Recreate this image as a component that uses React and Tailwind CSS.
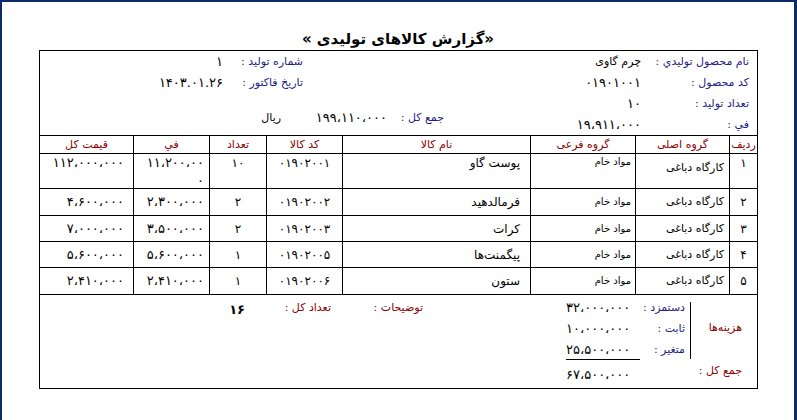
import React from 'react';

const rows = [
  { n: '۱', main: 'کارگاه دباغی', sub: 'مواد خام', name: 'پوست گاو', code: '۰۱۹۰۲۰۰۱', qty: '۱۰', fee: ['۱۱،۲۰۰،۰۰', '۰'], total: '۱۱۲،۰۰۰،۰۰۰' },
  { n: '۲', main: 'کارگاه دباغی', sub: 'مواد خام', name: 'فرمالدهید', code: '۰۱۹۰۲۰۰۲', qty: '۲', fee: ['۲،۳۰۰،۰۰۰'], total: '۴،۶۰۰،۰۰۰' },
  { n: '۳', main: 'کارگاه دباغی', sub: 'مواد خام', name: 'کرات', code: '۰۱۹۰۲۰۰۳', qty: '۲', fee: ['۳،۵۰۰،۰۰۰'], total: '۷،۰۰۰،۰۰۰' },
  { n: '۴', main: 'کارگاه دباغی', sub: 'مواد خام', name: 'پیگمنت‌ها', code: '۰۱۹۰۲۰۰۵', qty: '۱', fee: ['۵،۶۰۰،۰۰۰'], total: '۵،۶۰۰،۰۰۰' },
  { n: '۵', main: 'کارگاه دباغی', sub: 'مواد خام', name: 'ستون', code: '۰۱۹۰۲۰۰۶', qty: '۱', fee: ['۲،۴۱۰،۰۰۰'], total: '۲،۴۱۰،۰۰۰' },
];

const heads = ['ردیف', 'گروه اصلی', 'گروه فرعی', 'نام کالا', 'کد کالا', 'تعداد', 'في', 'قیمت کل'];

// row heights between the grid lines of the reference
const rowHeights = ['h-[35px]', 'h-[27px]', 'h-[26px]', 'h-[26px]', 'h-[27px]'];

const Label = ({ children, className = '' }) => (
  <div className={`text-[#1c1c84] ${className}`}>{children}</div>
);

export default function App() {
  return (
    <div className="w-[797px] h-[420px] overflow-hidden bg-white border-t-2 border-l-2 border-r-[3px] border-[#0d2a6a] font-['DejaVu_Sans',sans-serif] text-black text-[11px]">
      <h1 dir="rtl" className="pt-[27px] pb-[1px] text-center text-[15px] leading-[20px] font-bold">
        «گزارش کالاهای تولیدی »
      </h1>

      <div dir="rtl" className="ml-[37px] w-[719px]">
        {/* header info */}
        <div className="h-[85px] border-t border-x border-black flex">
          <div className="pr-[8px] grid grid-cols-[108px_90px] auto-rows-[21px] leading-[21px]">
            <Label>نام محصول تولیدي :</Label>
            <div>چرم گاوی</div>
            <Label>کد محصول :</Label>
            <div className="text-[13px]">۰۱۹۰۱۰۰۱</div>
            <Label>تعداد تولید :</Label>
            <div className="text-[13px]">۱۰</div>
            <Label>في :</Label>
            <div className="text-[13px]">۱۹،۹۱۱،۰۰۰</div>
          </div>

          <div className="flex-1 flex flex-col">
            <div className="pr-[248px] grid grid-cols-[80px_auto] auto-rows-[21px] leading-[21px]">
              <Label>شماره تولید :</Label>
              <div className="text-[13px]">۱</div>
              <Label>تاریخ فاکتور :</Label>
              <div className="text-[13px]">۱۴۰۳.۰۱.۲۶</div>
            </div>
            <div className="mt-[14px] pr-[107px] flex leading-[21px]">
              <Label className="w-[57px]">جمع کل :</Label>
              <div className="w-[106px] text-[13px]">۱۹۹،۱۱۰،۰۰۰</div>
              <div>ریال</div>
            </div>
          </div>
        </div>

        {/* items */}
        <table className="w-[719px] table-fixed border-collapse">
          <colgroup>
            <col className="w-[28px]" />
            <col className="w-[94px]" />
            <col className="w-[105px]" />
            <col className="w-[188px]" />
            <col className="w-[76px]" />
            <col className="w-[57px]" />
            <col className="w-[76px]" />
            <col className="w-[94px]" />
          </colgroup>
          <thead>
            <tr className="h-[18px]">
              {heads.map((h) => (
                <th key={h} className="border border-black p-0 font-normal text-[#8b0000] text-center leading-[16px]">
                  {h}
                </th>
              ))}
            </tr>
          </thead>
          <tbody>
            {rows.map((r, i) => (
              <tr key={r.n} className={`${rowHeights[i]} ${i === 0 ? 'align-top' : 'align-middle'}`}>
                <td className="border border-black p-0 text-center text-[12px] leading-[18px]">{r.n}</td>
                <td className={`border border-black p-0 pr-[5px] leading-[16px] ${i === 0 ? 'pt-[6px]' : ''}`}>{r.main}</td>
                <td className="border border-black p-0 pr-[4px] text-[10px] leading-[16px]">{r.sub}</td>
                <td className="border border-black p-0 pr-[10px] text-[12px] leading-[18px]">{r.name}</td>
                <td className="border border-black p-0 text-center text-[12px] leading-[18px]">{r.code}</td>
                <td className="border border-black p-0 text-center text-[12px] leading-[18px]">{r.qty}</td>
                <td className="border border-black p-0 pr-[5px] text-[13px]">
                  {r.fee.length > 1 ? (
                    <>
                      <div className="leading-[17px]">{r.fee[0]}</div>
                      <div className="mt-[3px] leading-[13px]">{r.fee[1]}</div>
                    </>
                  ) : (
                    <div className="leading-[18px]">{r.fee[0]}</div>
                  )}
                </td>
                <td className="border border-black p-0 pr-[9px] text-[13px] leading-[18px]">{r.total}</td>
              </tr>
            ))}
          </tbody>
        </table>

        {/* footer */}
        <div className="h-[94px] border-x border-b border-black flex items-start pt-[2px]">
          <div className="w-[191px] pr-[15px]">
            <div className="flex">
              <div className="w-[51px] h-[63px] flex items-center text-[#8b0000]">هزینه‌ها</div>
              <div className="w-px h-[57px] mt-[5px] bg-black" />
              <div className="pr-[5px] grid grid-cols-[45px_74px] auto-rows-[21px] leading-[21px]">
                <Label>دستمزد :</Label>
                <div className="text-left text-[13px]">۳۲،۰۰۰،۰۰۰</div>
                <Label>ثابت :</Label>
                <div className="text-left text-[13px]">۱۰،۰۰۰،۰۰۰</div>
                <Label>متغیر :</Label>
                <div className="text-left text-[13px] border-b border-black">۲۵،۵۰۰،۰۰۰</div>
              </div>
            </div>
            <div className="flex">
              <div className="w-[102px] leading-[22px] text-[#8b0000]">جمع کل :</div>
              <div className="w-[74px] pt-[4px] leading-[21px] text-left text-[13px]">۶۷،۵۰۰،۰۰۰</div>
            </div>
          </div>

          <div className="mr-[143px] w-[92px] leading-[21px] text-[#8b0000]">توضیحات :</div>
          <div className="w-[86px] leading-[21px] text-[#8b0000]">تعداد کل :</div>
          <div className="pt-[2px] leading-[21px] text-[13px] font-bold">۱۶</div>
        </div>
      </div>
    </div>
  );
}
